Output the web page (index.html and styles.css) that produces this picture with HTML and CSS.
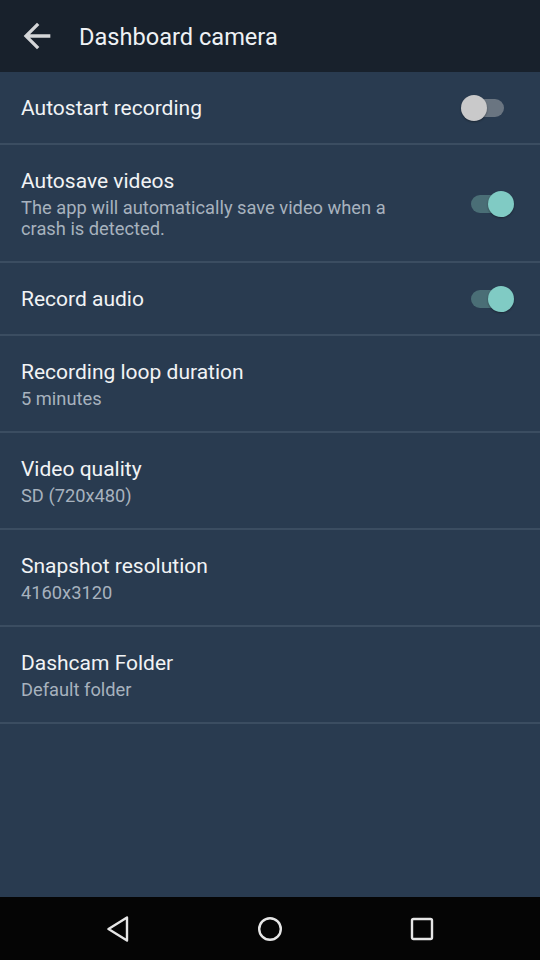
FILE: index.html
```html
<!DOCTYPE html>
<html lang="en">
<head>
<meta charset="utf-8">
<title>Dashboard camera</title>
<link rel="stylesheet" href="styles.css">
</head>
<body>
<div class="screen">
  <header class="appbar">
    <svg class="back" viewBox="0 0 24 24" width="40" height="40"><path d="M20 11H7.83l5.59-5.59L12 4l-8 8 8 8 1.41-1.41L7.83 13H20v-2z" fill="#d4d6d8"/></svg>
    <h1 class="appbar-title">Dashboard camera</h1>
  </header>
  <main class="list">
    <div class="item">
      <div class="text"><div class="title">Autostart recording</div></div>
      <div class="switch"></div>
    </div>
    <div class="item">
      <div class="text">
        <div class="title">Autosave videos</div>
        <div class="summary">The app will automatically save video when a crash is detected.</div>
      </div>
      <div class="switch on"></div>
    </div>
    <div class="item">
      <div class="text"><div class="title">Record audio</div></div>
      <div class="switch on"></div>
    </div>
    <div class="item">
      <div class="text">
        <div class="title">Recording loop duration</div>
        <div class="summary">5 minutes</div>
      </div>
    </div>
    <div class="item">
      <div class="text">
        <div class="title">Video quality</div>
        <div class="summary">SD (720x480)</div>
      </div>
    </div>
    <div class="item">
      <div class="text">
        <div class="title">Snapshot resolution</div>
        <div class="summary">4160x3120</div>
      </div>
    </div>
    <div class="item">
      <div class="text">
        <div class="title">Dashcam Folder</div>
        <div class="summary">Default folder</div>
      </div>
    </div>
  </main>
  <nav class="navbar">
    <svg viewBox="0 0 24 26" width="24" height="26"><path d="M21 1.5 L2.5 13 L21 24.5 Z" fill="none" stroke="#e6e6e6" stroke-width="2.4" stroke-linejoin="round"/></svg>
    <svg viewBox="0 0 24 26" width="24" height="26"><circle cx="12" cy="13" r="10.8" fill="none" stroke="#e6e6e6" stroke-width="2.4"/></svg>
    <svg viewBox="0 0 24 26" width="24" height="26"><rect x="2" y="3" width="20" height="20" rx="1.5" fill="none" stroke="#e6e6e6" stroke-width="2.4"/></svg>
  </nav>
</div>
</body>
</html>
```
FILE: styles.css
```css
* { box-sizing: border-box; }
html, body { margin: 0; padding: 0; }
body {
  width: 540px;
  height: 960px;
  font-family: Roboto, "Noto Sans", sans-serif;
  background: #293b50;
  overflow: hidden;
}
.screen {
  display: flex;
  flex-direction: column;
  height: 960px;
}
.appbar {
  height: 72px;
  flex: 0 0 72px;
  background: #18212c;
  display: flex;
  align-items: center;
  padding-left: 17px;
  box-shadow: 0 1px 2px rgba(0,0,0,0.35);
}
.back { display: block; flex: 0 0 auto; }
.appbar-title {
  margin: 2px 0 0 22px;
  font-size: 23.6px;
  font-weight: 400;
  color: #eef1f4;
  letter-spacing: 0;
}
.list {
  flex: 1;
  background: #293b50;
}
.item {
  display: flex;
  align-items: center;
  justify-content: space-between;
  padding: 23px 26px 22px 21px;
  border-bottom: 2px solid #3b4d61;
}
.text { width: 398px; }
.title {
  font-size: 21px;
  line-height: 26px;
  color: #f1f3f5;
}
.summary {
  margin-top: 3px;
  font-size: 18.3px;
  line-height: 21px;
  color: #a7b2be;
}
.switch {
  position: relative;
  width: 53px;
  height: 26px;
  flex: 0 0 53px;
}
.switch::before {
  content: "";
  position: absolute;
  left: 10px;
  top: 4px;
  width: 33px;
  height: 18px;
  border-radius: 9px;
  background: #6a7581;
}
.switch::after {
  content: "";
  position: absolute;
  left: 0;
  top: 0;
  width: 26px;
  height: 26px;
  border-radius: 50%;
  background: #c9c9ca;
  box-shadow: 0 1px 2px rgba(0,0,0,0.35);
}
.switch.on::before { background: #4a6e76; }
.switch.on::after { left: 27px; background: #80cbc4; }
.navbar {
  flex: 0 0 63px;
  height: 63px;
  background: #050505;
  display: flex;
  align-items: center;
  justify-content: center;
  gap: 128px;
}
.navbar svg { display: block; }
```
